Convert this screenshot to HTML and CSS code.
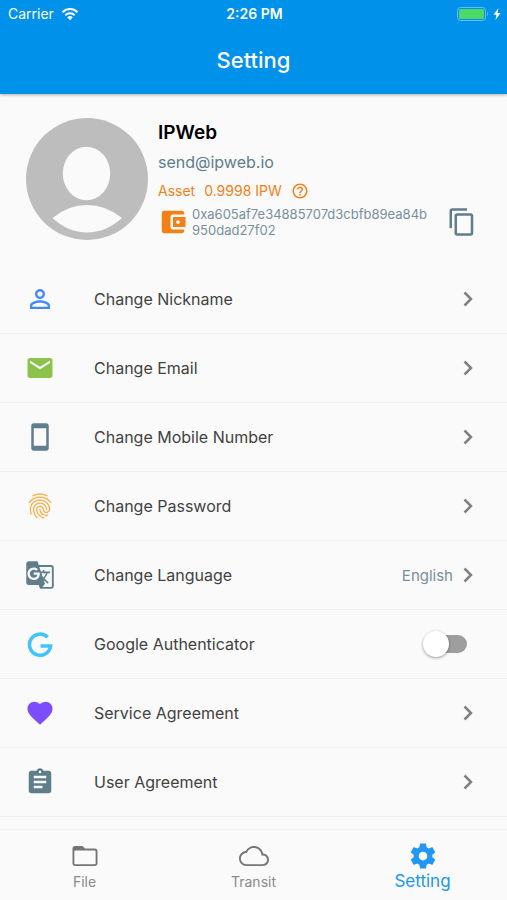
FILE: index.html
```html
<!DOCTYPE html>
<html lang="en">
<head>
<meta charset="utf-8">
<meta name="viewport" content="width=device-width, initial-scale=1">
<title>Setting</title>
<link rel="stylesheet" href="styles.css">
</head>
<body>
<header class="app-bar">
  <div class="status">
    <div class="carrier">Carrier
      <svg class="wifi" viewBox="0 0 18 14" aria-hidden="true"><path class="arc" d="M1.5 5.2a10.6 10.6 0 0 1 15 0M4.3 8.2a6.6 6.6 0 0 1 9.4 0"/><path d="M9 13.2l2.8-2.9a4 4 0 0 0-5.6 0z"/></svg>
    </div>
    <div class="clock">2:26 PM</div>
    <div class="power">
      <svg class="battery" viewBox="0 0 32 14" aria-hidden="true"><rect class="shell" x="0.5" y="0.5" width="28" height="13" rx="3"/><rect class="charge" x="2" y="2" width="25" height="10" rx="1.5"/><path class="tip" d="M30 4.800q2 2.200 0 4.400z"/></svg>
      <svg class="bolt" viewBox="0 0 8 12" aria-hidden="true"><path d="M5.400 0L0.500 6.800h2.900L2.500 12 7.500 5H4.600z"/></svg>
    </div>
  </div>
  <h1 class="title">Setting</h1>
</header>

<main class="content">
  <section class="profile">
    <svg class="avatar" viewBox="0 0 122 122" role="img" aria-label="Avatar"><circle class="disc" cx="61" cy="61" r="61"/><ellipse cx="60.500" cy="55.500" rx="23.700" ry="26.700"/><path d="M26.500 100Q42 87 61 87t35 13Q80 114.500 61 114.500T26.500 100z"/></svg>
    <div class="details">
      <h2 class="name">IPWeb</h2>
      <p class="email">send@ipweb.io</p>
      <p class="asset"><span>Asset</span><span>0.9998 IPW</span>
        <button class="icon-button" type="button" aria-label="About asset"><svg class="help" viewBox="0 0 24 24"><path d="M11 18h2v-2h-2v2zm1-16C6.480 2 2 6.480 2 12s4.480 10 10 10 10-4.480 10-10S17.520 2 12 2zm0 18c-4.410 0-8-3.590-8-8s3.590-8 8-8 8 3.590 8 8-3.590 8-8 8zm0-14c-2.210 0-4 1.790-4 4h2c0-1.100.9-2 2-2s2 .9 2 2c0 2-3 1.750-3 5h2c0-2.250 3-2.500 3-5 0-2.210-1.790-4-4-4z"/></svg></button>
      </p>
      <div class="wallet">
        <svg class="icon orange" viewBox="0 0 24 24" aria-hidden="true"><path d="M21 18v1c0 1.100-.9 2-2 2H5c-1.110 0-2-.9-2-2V5c0-1.100.89-2 2-2h14c1.100 0 2 .9 2 2v1h-9c-1.110 0-2 .9-2 2v8c0 1.100.89 2 2 2h9zm-9-2h10V8H12v8zm4-2.500c-.83 0-1.500-.67-1.500-1.500s.67-1.500 1.500-1.500 1.500.67 1.500 1.500-.67 1.500-1.500 1.500z"/></svg>
        <p class="address">0xa605af7e34885707d3cbfb89ea84b950dad27f02</p>
        <button class="icon-button" type="button" aria-label="Copy address"><svg class="icon slate" viewBox="0 0 24 24"><path d="M16 1H4c-1.100 0-2 .9-2 2v14h2V3h12V1zm3 4H8c-1.100 0-2 .9-2 2v14c0 1.100.9 2 2 2h11c1.100 0 2-.9 2-2V7c0-1.100-.9-2-2-2zm0 16H8V7h11v14z"/></svg></button>
      </div>
    </div>
  </section>

  <ul class="settings">
    <li><a class="row" href="#nickname"><svg class="icon blue" viewBox="0 0 24 24" aria-hidden="true"><path d="M12 5.900c1.160 0 2.100.94 2.100 2.100s-.94 2.100-2.100 2.100S9.900 9.160 9.900 8s.94-2.100 2.100-2.100m0 9c2.970 0 6.100 1.460 6.100 2.100v1.100H5.900V17c0-.64 3.130-2.100 6.100-2.100M12 4C9.790 4 8 5.790 8 8s1.790 4 4 4 4-1.790 4-4-1.790-4-4-4zm0 9c-2.670 0-8 1.340-8 4v3h16v-3c0-2.660-5.330-4-8-4z"/></svg><span class="label">Change Nickname</span><svg class="chevron" viewBox="0 0 10 16" aria-hidden="true"><path d="M1.500 1.500L8 8l-6.500 6.500"/></svg></a></li>
    <li><a class="row" href="#email"><svg class="icon green" viewBox="0 0 24 24" aria-hidden="true"><path d="M20 4H4c-1.100 0-1.990.9-1.990 2L2 18c0 1.100.9 2 2 2h16c1.100 0 2-.9 2-2V6c0-1.100-.9-2-2-2zm0 4l-8 5-8-5V6l8 5 8-5v2z"/></svg><span class="label">Change Email</span><svg class="chevron" viewBox="0 0 10 16" aria-hidden="true"><path d="M1.500 1.500L8 8l-6.500 6.500"/></svg></a></li>
    <li><a class="row" href="#mobile"><svg class="icon slate" viewBox="0 0 24 24" aria-hidden="true"><path d="M17 1.010L7 1c-1.100 0-1.990.9-1.990 2v18c0 1.100.89 2 1.990 2h10c1.100 0 2-.9 2-2V3c0-1.100-.9-1.990-2-1.990zM17 19H7V5h10v14z"/></svg><span class="label">Change Mobile Number</span><svg class="chevron" viewBox="0 0 10 16" aria-hidden="true"><path d="M1.500 1.500L8 8l-6.500 6.500"/></svg></a></li>
    <li><a class="row" href="#password"><svg class="icon amber" viewBox="0 0 24 24" aria-hidden="true"><path d="M17.810 4.470c-.08 0-.16-.02-.23-.06C15.660 3.420 14 3 12.010 3c-1.980 0-3.860.47-5.570 1.410-.24.13-.54.04-.68-.2-.13-.24-.04-.55.2-.68C7.820 2.520 9.860 2 12.010 2c2.130 0 3.990.47 6.030 1.520.25.13.34.43.21.67-.09.18-.26.28-.44.28zM3.500 9.720c-.1 0-.2-.03-.29-.09-.23-.16-.28-.47-.12-.7.99-1.400 2.250-2.500 3.750-3.270C9.980 4.040 14 4.030 17.150 5.650c1.500.77 2.760 1.860 3.750 3.250.16.22.11.54-.12.7-.23.16-.54.11-.7-.12-.9-1.260-2.040-2.250-3.390-2.940-2.870-1.470-6.540-1.470-9.400.01-1.360.7-2.500 1.700-3.400 2.960-.08.14-.23.21-.39.21zm6.250 12.070c-.13 0-.26-.05-.35-.15-.87-.87-1.340-1.430-2.010-2.640-.69-1.230-1.050-2.730-1.050-4.340 0-2.970 2.540-5.390 5.660-5.390s5.660 2.420 5.660 5.390c0 .28-.22.5-.5.5s-.5-.22-.5-.5c0-2.420-2.090-4.390-4.660-4.390-2.570 0-4.660 1.970-4.660 4.390 0 1.440.32 2.770.93 3.850.64 1.150 1.080 1.640 1.850 2.420.19.2.19.51 0 .71-.11.1-.24.15-.37.15zm7.170-1.850c-1.190 0-2.240-.3-3.100-.89-1.490-1.010-2.380-2.650-2.380-4.390 0-.28.22-.5.5-.5s.5.22.5.5c0 1.410.72 2.740 1.940 3.560.71.48 1.540.71 2.540.71.24 0 .64-.03 1.040-.1.27-.05.53.13.58.41.05.27-.13.53-.41.58-.57.11-1.070.12-1.210.12zM14.910 22c-.04 0-.09-.01-.13-.02-1.590-.44-2.630-1.030-3.720-2.100-1.400-1.390-2.170-3.240-2.170-5.220 0-1.620 1.380-2.940 3.080-2.940 1.700 0 3.080 1.320 3.080 2.940 0 1.070.93 1.940 2.080 1.940s2.080-.87 2.080-1.940c0-3.770-3.250-6.830-7.250-6.830-2.840 0-5.440 1.580-6.610 4.030-.39.81-.59 1.760-.59 2.800 0 .78.07 2.010.67 3.610.1.26-.03.55-.29.64-.26.1-.55-.04-.64-.29-.49-1.310-.73-2.610-.73-3.960 0-1.200.23-2.290.68-3.240 1.330-2.790 4.280-4.600 7.510-4.600 4.550 0 8.250 3.510 8.250 7.830 0 1.620-1.380 2.940-3.080 2.940s-3.080-1.320-3.080-2.940c0-1.070-.93-1.940-2.080-1.940s-2.080.87-2.080 1.940c0 1.710.66 3.310 1.870 4.510.95.94 1.860 1.460 3.270 1.850.27.07.42.35.35.61-.05.23-.26.38-.47.38z"/></svg><span class="label">Change Password</span><svg class="chevron" viewBox="0 0 10 16" aria-hidden="true"><path d="M1.500 1.500L8 8l-6.500 6.500"/></svg></a></li>
    <li><a class="row" href="#language"><svg class="icon slate" viewBox="0 0 24 24" aria-hidden="true"><path d="M21 4H11l-1-3H3c-1.100 0-2 .9-2 2v15c0 1.100.9 2 2 2h8l1 3h9c1.100 0 2-.9 2-2V6c0-1.100-.9-2-2-2zM7 16c-2.760 0-5-2.240-5-5s2.240-5 5-5c1.350 0 2.480.5 3.350 1.300L9.030 8.570c-.38-.36-1.040-.78-2.030-.78-1.740 0-3.150 1.440-3.150 3.210S5.260 14.210 7 14.210c2.010 0 2.840-1.440 2.920-2.410H7v-1.710h4.680c.07.31.12.61.12 1.020C11.800 13.970 9.890 16 7 16zm6.170-5.420h3.700c-.43 1.250-1.110 2.430-2.050 3.470-.31-.35-.6-.72-.86-1.100l-.79-2.370zm8.330 9.920c0 .55-.45 1-1 1H14l2-2.500-1.040-3.100 3.100 3.100.92-.92-3.300-3.250.02-.02c1.130-1.250 1.930-2.690 2.400-4.220H20v-1.300h-4.530V8h-1.290v1.290h-1.440L11.460 5.500h9.040c.55 0 1 .45 1 1v14z"/></svg><span class="label">Change Language</span><span class="value">English</span><svg class="chevron" viewBox="0 0 10 16" aria-hidden="true"><path d="M1.500 1.500L8 8l-6.500 6.500"/></svg></a></li>
    <li><label class="row"><svg class="icon sky" viewBox="0 0 30 30" aria-hidden="true"><path class="ring" d="M22.600 8.200A10.600 10.600 0 1 0 25.600 17H15.500"/></svg><span class="label">Google Authenticator</span><input class="switch" type="checkbox" role="switch"></label></li>
    <li><a class="row" href="#service"><svg class="icon violet" viewBox="0 0 24 24" aria-hidden="true"><path d="M12 21.350l-1.450-1.320C5.400 15.360 2 12.280 2 8.500 2 5.420 4.420 3 7.500 3c1.740 0 3.410.81 4.500 2.090C13.090 3.810 14.760 3 16.500 3 19.580 3 22 5.420 22 8.500c0 3.780-3.400 6.860-8.550 11.540L12 21.350z"/></svg><span class="label">Service Agreement</span><svg class="chevron" viewBox="0 0 10 16" aria-hidden="true"><path d="M1.500 1.500L8 8l-6.500 6.500"/></svg></a></li>
    <li><a class="row" href="#user"><svg class="icon slate" viewBox="0 0 24 24" aria-hidden="true"><path d="M19 3h-4.180C14.400 1.840 13.300 1 12 1c-1.300 0-2.400.84-2.820 2H5c-1.100 0-2 .9-2 2v14c0 1.100.9 2 2 2h14c1.100 0 2-.9 2-2V5c0-1.100-.9-2-2-2zm-7 0c.55 0 1 .45 1 1s-.45 1-1 1-1-.45-1-1 .45-1 1-1zm2 14H7v-2h7v2zm3-4H7v-2h10v2zm0-4H7V7h10v2z"/></svg><span class="label">User Agreement</span><svg class="chevron" viewBox="0 0 10 16" aria-hidden="true"><path d="M1.500 1.500L8 8l-6.500 6.500"/></svg></a></li>
  </ul>
</main>

<nav class="tabs">
  <a class="tab" href="#file"><svg class="icon" viewBox="0 0 24 24" aria-hidden="true"><path d="M20 6h-8l-2-2H4c-1.100 0-1.990.9-1.990 2L2 18c0 1.100.9 2 2 2h16c1.100 0 2-.9 2-2V8c0-1.100-.9-2-2-2zm.5 12c0 .3-.2.5-.5.5H4c-.3 0-.5-.2-.5-.5V8c0-.3.2-.5.5-.5h16c.3 0 .5.2.5.5v10z"/></svg><span>File</span></a>
  <a class="tab" href="#transit"><svg class="icon" viewBox="0 0 24 24" aria-hidden="true"><path d="M19.350 10.040C18.670 6.590 15.640 4 12 4 9.110 4 6.600 5.640 5.350 8.040 2.340 8.360 0 10.910 0 14c0 3.310 2.690 6 6 6h13c2.760 0 5-2.240 5-5 0-2.640-2.050-4.780-4.650-4.960zM19 18.500H6c-2.480 0-4.500-2.020-4.500-4.500s2.020-4.500 4.500-4.500h.4C7 7.100 9.300 5.500 12 5.500c3.300 0 6 2.700 6 6h1c1.930 0 3.500 1.570 3.500 3.500s-1.570 3.500-3.500 3.500z"/></svg><span>Transit</span></a>
  <a class="tab active" href="#setting" aria-current="page"><svg class="icon" viewBox="0 0 24 24" aria-hidden="true"><path d="M19.430 12.980c.04-.32.07-.64.07-.98s-.03-.66-.07-.98l2.110-1.650c.19-.15.24-.42.12-.64l-2-3.460c-.12-.22-.39-.3-.61-.22l-2.490 1c-.52-.4-1.080-.73-1.690-.98l-.38-2.650C14.460 2.180 14.250 2 14 2h-4c-.25 0-.46.18-.49.42l-.38 2.650c-.61.25-1.170.59-1.690.98l-2.490-1c-.23-.09-.49 0-.61.22l-2 3.460c-.13.22-.07.49.12.64l2.110 1.650c-.04.32-.07.65-.07.98s.03.66.07.98l-2.110 1.650c-.19.15-.24.42-.12.64l2 3.460c.12.22.39.3.61.22l2.490-1c.52.4 1.080.73 1.690.98l.38 2.650c.03.24.24.42.49.42h4c.25 0 .46-.18.49-.42l.38-2.650c.61-.25 1.170-.59 1.690-.98l2.490 1c.23.09.49 0 .61-.22l2-3.460c.12-.22.07-.49-.12-.64l-2.110-1.650zM12 15.500c-1.930 0-3.500-1.570-3.500-3.500s1.570-3.500 3.500-3.500 3.500 1.570 3.500 3.500-1.570 3.500-3.500 3.500z"/></svg><span>Setting</span></a>
</nav>
</body>
</html>
```
FILE: styles.css
```css
* {
  box-sizing: border-box;
}

body {
  margin: 0;
  height: 100vh;
  display: flex;
  flex-direction: column;
  background: #fafafa;
  color: #424242;
  font-family: Inter, "Liberation Sans", sans-serif;
  font-size: 16px;
}

h1,
h2,
p,
ul {
  margin: 0;
  padding: 0;
}

svg {
  display: block;
  flex: none;
  fill: currentColor;
}

a {
  color: inherit;
  text-decoration: none;
}

.icon {
  width: 30px;
  height: 30px;
}

.icon-button {
  padding: 0;
  border: 0;
  background: none;
  color: inherit;
}

.blue { color: #448aff; }
.green { color: #8bc34a; }
.slate { color: #607d8b; }
.amber { color: #ffab40; }
.sky { color: #40c4ff; }
.violet { color: #7c4dff; }
.orange { color: #f57f17; }

/* App bar */
.app-bar {
  flex: none;
  position: relative;
  background: #0091ea;
  color: #fff;
  box-shadow: 0 1px 3px rgba(0, 0, 0, 0.3);
}

.status {
  display: grid;
  grid-template-columns: 1fr auto 1fr;
  align-items: center;
  height: 27px;
  padding: 0 6px 0 8px;
  font-size: 14px;
}

.carrier,
.power {
  display: flex;
  align-items: center;
}

.carrier {
  gap: 7px;
}

.power {
  justify-content: flex-end;
  gap: 4px;
}

.clock {
  font-weight: 600;
}

.wifi {
  width: 18px;
  height: 14px;
}

.arc {
  fill: none;
  stroke: currentColor;
  stroke-width: 2;
}

.battery {
  width: 32px;
  height: 14px;
}

.shell {
  fill: none;
  stroke: #66bdf2;
}

.charge {
  fill: #4cd964;
}

.tip {
  fill: #66bdf2;
}

.bolt {
  width: 8px;
  height: 12px;
}

.title {
  padding: 17px 0 18px;
  font-size: 22px;
  font-weight: 500;
  line-height: 32px;
  text-align: center;
}

/* Profile */
.content {
  flex: 1;
  min-height: 0;
  overflow: hidden;
}

.profile {
  display: flex;
  gap: 10px;
  padding: 24px 30px 25px 26px;
}

.avatar {
  width: 122px;
  height: 122px;
  fill: #fafafa;
}

.disc {
  fill: #bdbdbd;
}

.details {
  flex: 1;
  min-width: 0;
}

.name {
  color: #000;
  font-size: 19px;
  font-weight: 600;
  line-height: 30px;
}

.email {
  color: #607d8b;
  font-size: 16px;
  line-height: 28px;
}

.asset {
  display: flex;
  align-items: center;
  gap: 9px;
  color: #f57f17;
  font-size: 14px;
  line-height: 30px;
}

.help {
  width: 18px;
  height: 18px;
}

.wallet {
  display: flex;
  align-items: center;
  gap: 4px;
}

.address {
  flex: 1;
  min-width: 0;
  padding-right: 8px;
  color: #78909c;
  font-size: 13px;
  line-height: 16px;
  overflow-wrap: anywhere;
}

/* Settings list */
.settings {
  list-style: none;
}

.row {
  display: flex;
  align-items: center;
  height: 69px;
  padding: 0 34px 0 25px;
  border-bottom: 1px solid #f0f0f0;
}

.label {
  flex: 1;
  margin-left: 39px;
}

.value {
  margin-right: 10px;
  color: #78909c;
  font-size: 15px;
}

.chevron {
  width: 10px;
  height: 16px;
  fill: none;
  stroke: #808080;
  stroke-width: 2.5;
}

.ring {
  fill: none;
  stroke: currentColor;
  stroke-width: 3.5;
}

.switch {
  appearance: none;
  position: relative;
  width: 44px;
  height: 18px;
  margin: 0 6px 0 0;
  border-radius: 9px;
  background: linear-gradient(90deg, transparent 12px, #9e9e9e 12px);
}

.switch::before {
  content: "";
  position: absolute;
  top: -4px;
  left: 0;
  width: 26px;
  height: 26px;
  border-radius: 50%;
  background: #fff;
  box-shadow: 0 1px 3px rgba(0, 0, 0, 0.4);
}

/* Bottom tabs */
.tabs {
  flex: none;
  position: relative;
  display: grid;
  grid-template-columns: repeat(3, 1fr);
  height: 71px;
  padding-top: 11px;
  background: #fafafa;
  border-top: 1px solid #f3f3f3;
}

.tab {
  display: flex;
  flex-direction: column;
  align-items: center;
  color: #757575;
  font-size: 14px;
  line-height: 22px;
}

.tab span {
  color: #8a8a8a;
}

.tab.active,
.tab.active span {
  color: #2196f3;
}

.tab.active {
  font-size: 17px;
  line-height: 20px;
}
```
